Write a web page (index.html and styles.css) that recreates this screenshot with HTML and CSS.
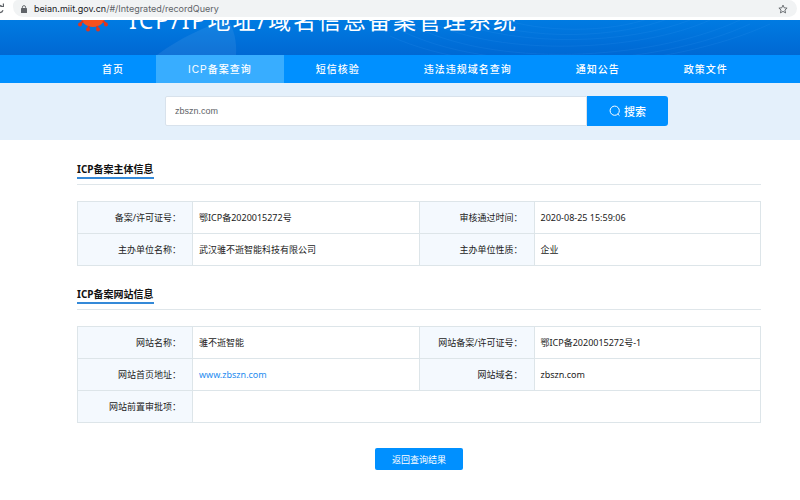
FILE: index.html
```html
<!DOCTYPE html>
<html>
<head>
<meta charset="utf-8">
<title>ICP/IP地址/域名信息备案管理系统</title>
<link rel="stylesheet" href="styles.css">
</head>
<body>
<div class="toolbar">
  <svg class="reload" viewBox="0 0 5 12" aria-hidden="true"><path d="M0 3.200 1.800 4.200M3.400 1.500v3H.3M0 10.600c1.600-.1 2.600-1 3-2.300" fill="none" stroke="#5f6368" stroke-width="1.200"/></svg>
  <div class="omnibox">
    <svg class="lock" viewBox="0 0 6 8" aria-hidden="true"><rect y="3" width="6" height="5" rx=".6" fill="#5f6368"/><path d="M1.400 3.300V2.200a1.600 1.600 0 0 1 3.200 0v1.100" fill="none" stroke="#5f6368" stroke-width=".9"/></svg>
    <span class="url"><span class="host">beian.miit.gov.cn</span>/#/Integrated/recordQuery</span>
    <svg class="star" viewBox="0 0 10 10" aria-hidden="true"><path d="M5 1.100 6.200 3.800l2.900.3-2.200 1.900.7 2.900L5 7.400 2.400 8.900l.7-2.900L.9 4.100l2.900-.3z" fill="none" stroke="#5f6368" stroke-width=".9"/></svg>
  </div>
</div>
<header class="banner">
  <svg class="backdrop" viewBox="0 0 800 35" preserveAspectRatio="none" aria-hidden="true">
    <path d="M157 35C180 18 205 6 228 0c6 9 9 22 8 35z" fill="#fff" opacity=".07"/>
    <g fill="none" stroke="#5cb4ff" stroke-width=".7" opacity=".15">
      <path d="M430 2c70 35 210 30 280-2M450 0c70 28 180 24 240 0M470-2c60 24 150 20 200 0M410 4c80 44 240 38 330-4M400 10c90 46 260 36 350-6M390 16c100 46 280 34 380-12M500-2c40 15 110 15 150 0"/>
    </g>
  </svg>
  <svg class="emblem" viewBox="0 0 32 32" aria-hidden="true">
    <circle cx="16" cy="14" r="13" fill="#f4511e"/>
    <g stroke="#e0341c" stroke-width="2"><path d="M6 21 3 24M26 21l3 3M12 26l-1 3M20 26l1 3"/></g>
    <g fill="#e0341c"><circle cx="3" cy="24.500" r="2"/><circle cx="29" cy="24.500" r="2"/><circle cx="11" cy="29.500" r="2"/><circle cx="21" cy="29.500" r="2"/></g>
  </svg>
  <h1 class="title">ICP/IP地址/域名信息备案管理系统</h1>
</header>
<nav class="menu">
  <a href="#">首页</a>
  <a href="#" class="active">ICP备案查询</a>
  <a href="#">短信核验</a>
  <a href="#">违法违规域名查询</a>
  <a href="#">通知公告</a>
  <a href="#">政策文件</a>
</nav>
<form class="search">
  <input type="text" value="zbszn.com" aria-label="查询">
  <button type="button"><svg viewBox="0 0 12 12" aria-hidden="true"><circle cx="5.700" cy="5.700" r="4.600" fill="none" stroke="#fff"/><path d="m8.800 9 1.700 1.700" stroke="#fff"/></svg>搜索</button>
</form>
<main class="content">
  <section>
    <div class="heading"><h2>ICP备案主体信息</h2></div>
    <table>
      <colgroup><col class="label"><col><col class="label"><col></colgroup>
      <tr><th>备案/许可证号：</th><td>鄂ICP备2020015272号</td><th>审核通过时间：</th><td>2020-08-25 15:59:06</td></tr>
      <tr><th>主办单位名称：</th><td>武汉骓不逝智能科技有限公司</td><th>主办单位性质：</th><td>企业</td></tr>
    </table>
  </section>
  <section>
    <div class="heading"><h2>ICP备案网站信息</h2></div>
    <table>
      <colgroup><col class="label"><col><col class="label"><col></colgroup>
      <tr><th>网站名称：</th><td>骓不逝智能</td><th>网站备案/许可证号：</th><td>鄂ICP备2020015272号-1</td></tr>
      <tr><th>网站首页地址：</th><td><a href="#">www.zbszn.com</a></td><th>网站域名：</th><td>zbszn.com</td></tr>
      <tr><th>网站前置审批项：</th><td colspan="3"></td></tr>
    </table>
  </section>
  <button type="button" class="back">返回查询结果</button>
</main>
</body>
</html>
```
FILE: styles.css
```css
* { box-sizing: border-box; }
body {
  margin: 0;
  background: #fff;
  color: #1b1b1b;
  font: 9px/16px "Noto Sans", "Noto Sans CJK SC", sans-serif;
}
h1, h2 { margin: 0; }
svg { display: block; flex: none; }
button { border: 0; background: #0090ff; color: #fff; font-family: inherit; }

.toolbar {
  display: flex;
  height: 20px;
  padding: 0 3px 3px 0;
}
.reload { width: 5px; height: 12px; margin: 2px 8px 0 0; }
.omnibox {
  display: flex;
  flex: 1;
  align-items: center;
  gap: 7px;
  padding: 0 9px 0 8px;
  border-radius: 6px 10px 10px 12px;
  background: #f1f3f4;
}
.lock { width: 6px; height: 8px; }
.url {
  flex: 1;
  color: #5f6368;
  font-family: Inter, sans-serif;
  font-size: 9px;
}
.host { color: #202124; }
.star { width: 10px; height: 10px; }

.banner {
  position: relative;
  display: flex;
  align-items: flex-end;
  gap: 20px;
  height: 35px;
  padding: 0 77px 23px;
  overflow: hidden;
  background: linear-gradient(#007be2, #0068d3);
}
.backdrop { position: absolute; inset: 0; width: 100%; height: 100%; }
.emblem { position: relative; width: 32px; height: 32px; }
.title {
  position: relative;
  color: #fff;
  font-size: 23px;
  font-weight: 400;
  line-height: 24px;
  letter-spacing: 2px;
  white-space: nowrap;
}

.menu {
  display: flex;
  padding-left: 70px;
  background: #0090ff;
}
.menu a {
  padding: 1px 32px 0;
  color: #fff;
  font-family: "Liberation Sans", "Noto Sans CJK SC", sans-serif;
  font-size: 10px;
  font-weight: 500;
  line-height: 27px;
  letter-spacing: 1px;
  text-decoration: none;
  white-space: nowrap;
}
.menu .active { background: #38adff; }

.search {
  display: flex;
  padding: 13px 132px 14px 165px;
  background: #e4f0fb;
}
.search input {
  flex: 1;
  min-width: 0;
  height: 30px;
  padding: 0 9px;
  border: 1px solid #d8e2ec;
  border-radius: 2px 0 0 2px;
  background: #fff;
  color: #606266;
  font: 9px "Liberation Sans", sans-serif;
}
.search button {
  display: flex;
  align-items: center;
  justify-content: center;
  gap: 3px;
  width: 81px;
  border-radius: 0 3px 3px 0;
  font-size: 11px;
  font-weight: 500;
}
.search svg { width: 12px; height: 12px; }

.content {
  display: flex;
  flex-direction: column;
  padding: 21px 39px 29px 77px;
}
.heading {
  display: flex;
  height: 24px;
  margin-bottom: 16px;
  border-bottom: 1px solid #dfe6ea;
}
.heading h2 {
  height: 18px;
  border-bottom: 2px solid #3489d8;
  color: #111;
  font-size: 10px;
  font-weight: 700;
  line-height: 16px;
}
section { margin-bottom: 20px; }
table {
  width: 100%;
  border-collapse: collapse;
  table-layout: fixed;
}
.label { width: 115px; }
th, td {
  height: 32px;
  padding: 0 6px;
  border: 1px solid #dde5e9;
  font-weight: 400;
  text-align: left;
}
th {
  padding: 0 11px;
  background: #f4f9fe;
  text-align: right;
}
td a { color: #1e8cef; text-decoration: none; }
.back {
  align-self: center;
  width: 88px;
  height: 22px;
  margin-top: 5px;
  border-radius: 2px;
  font-size: 9px;
}
```
